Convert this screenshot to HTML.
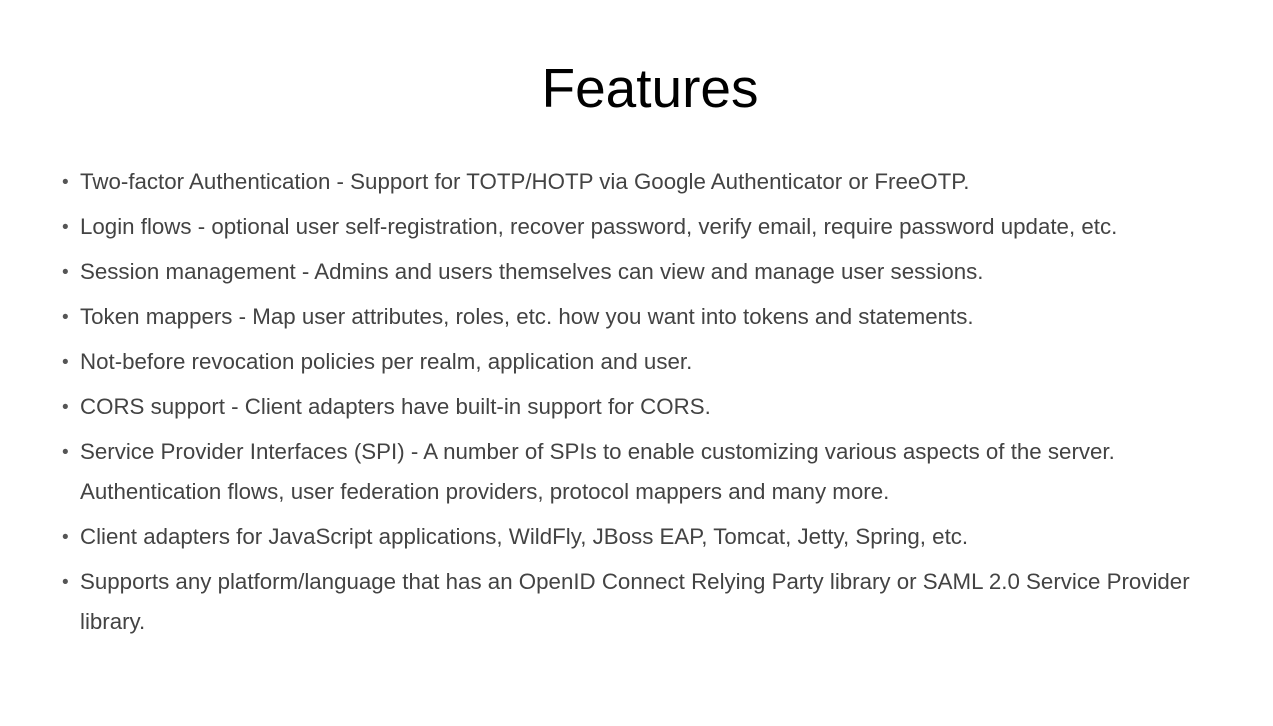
<!DOCTYPE html>
<html><head><meta charset="utf-8"><style>
html,body{margin:0;padding:0;background:#fff;width:1273px;height:726px;overflow:hidden}
body{font-family:"Liberation Sans",sans-serif}
h1{position:absolute;left:0;width:1300px;top:53px;margin:0;text-align:center;font-weight:normal;font-size:55px;color:#000;line-height:70px}
ul{position:absolute;left:80px;top:162px;margin:0;padding:0;list-style:none;width:1170px}
li{position:relative;font-size:22.3px;color:#434343;line-height:40px;margin-bottom:5px;white-space:nowrap}
li:before{content:"•";position:absolute;left:-18px;top:1px;font-size:19px;color:#555}
</style></head><body>
<h1>Features</h1>
<ul>
<li>Two-factor Authentication - Support for TOTP/HOTP via Google Authenticator or FreeOTP.</li>
<li>Login flows - optional user self-registration, recover password, verify email, require password update, etc.</li>
<li>Session management - Admins and users themselves can view and manage user sessions.</li>
<li>Token mappers - Map user attributes, roles, etc. how you want into tokens and statements.</li>
<li>Not-before revocation policies per realm, application and user.</li>
<li>CORS support - Client adapters have built-in support for CORS.</li>
<li>Service Provider Interfaces (SPI) - A number of SPIs to enable customizing various aspects of the server.<br>Authentication flows, user federation providers, protocol mappers and many more.</li>
<li>Client adapters for JavaScript applications, WildFly, JBoss EAP, Tomcat, Jetty, Spring, etc.</li>
<li>Supports any platform/language that has an OpenID Connect Relying Party library or SAML 2.0 Service Provider<br>library.</li>
</ul>
</body></html>
